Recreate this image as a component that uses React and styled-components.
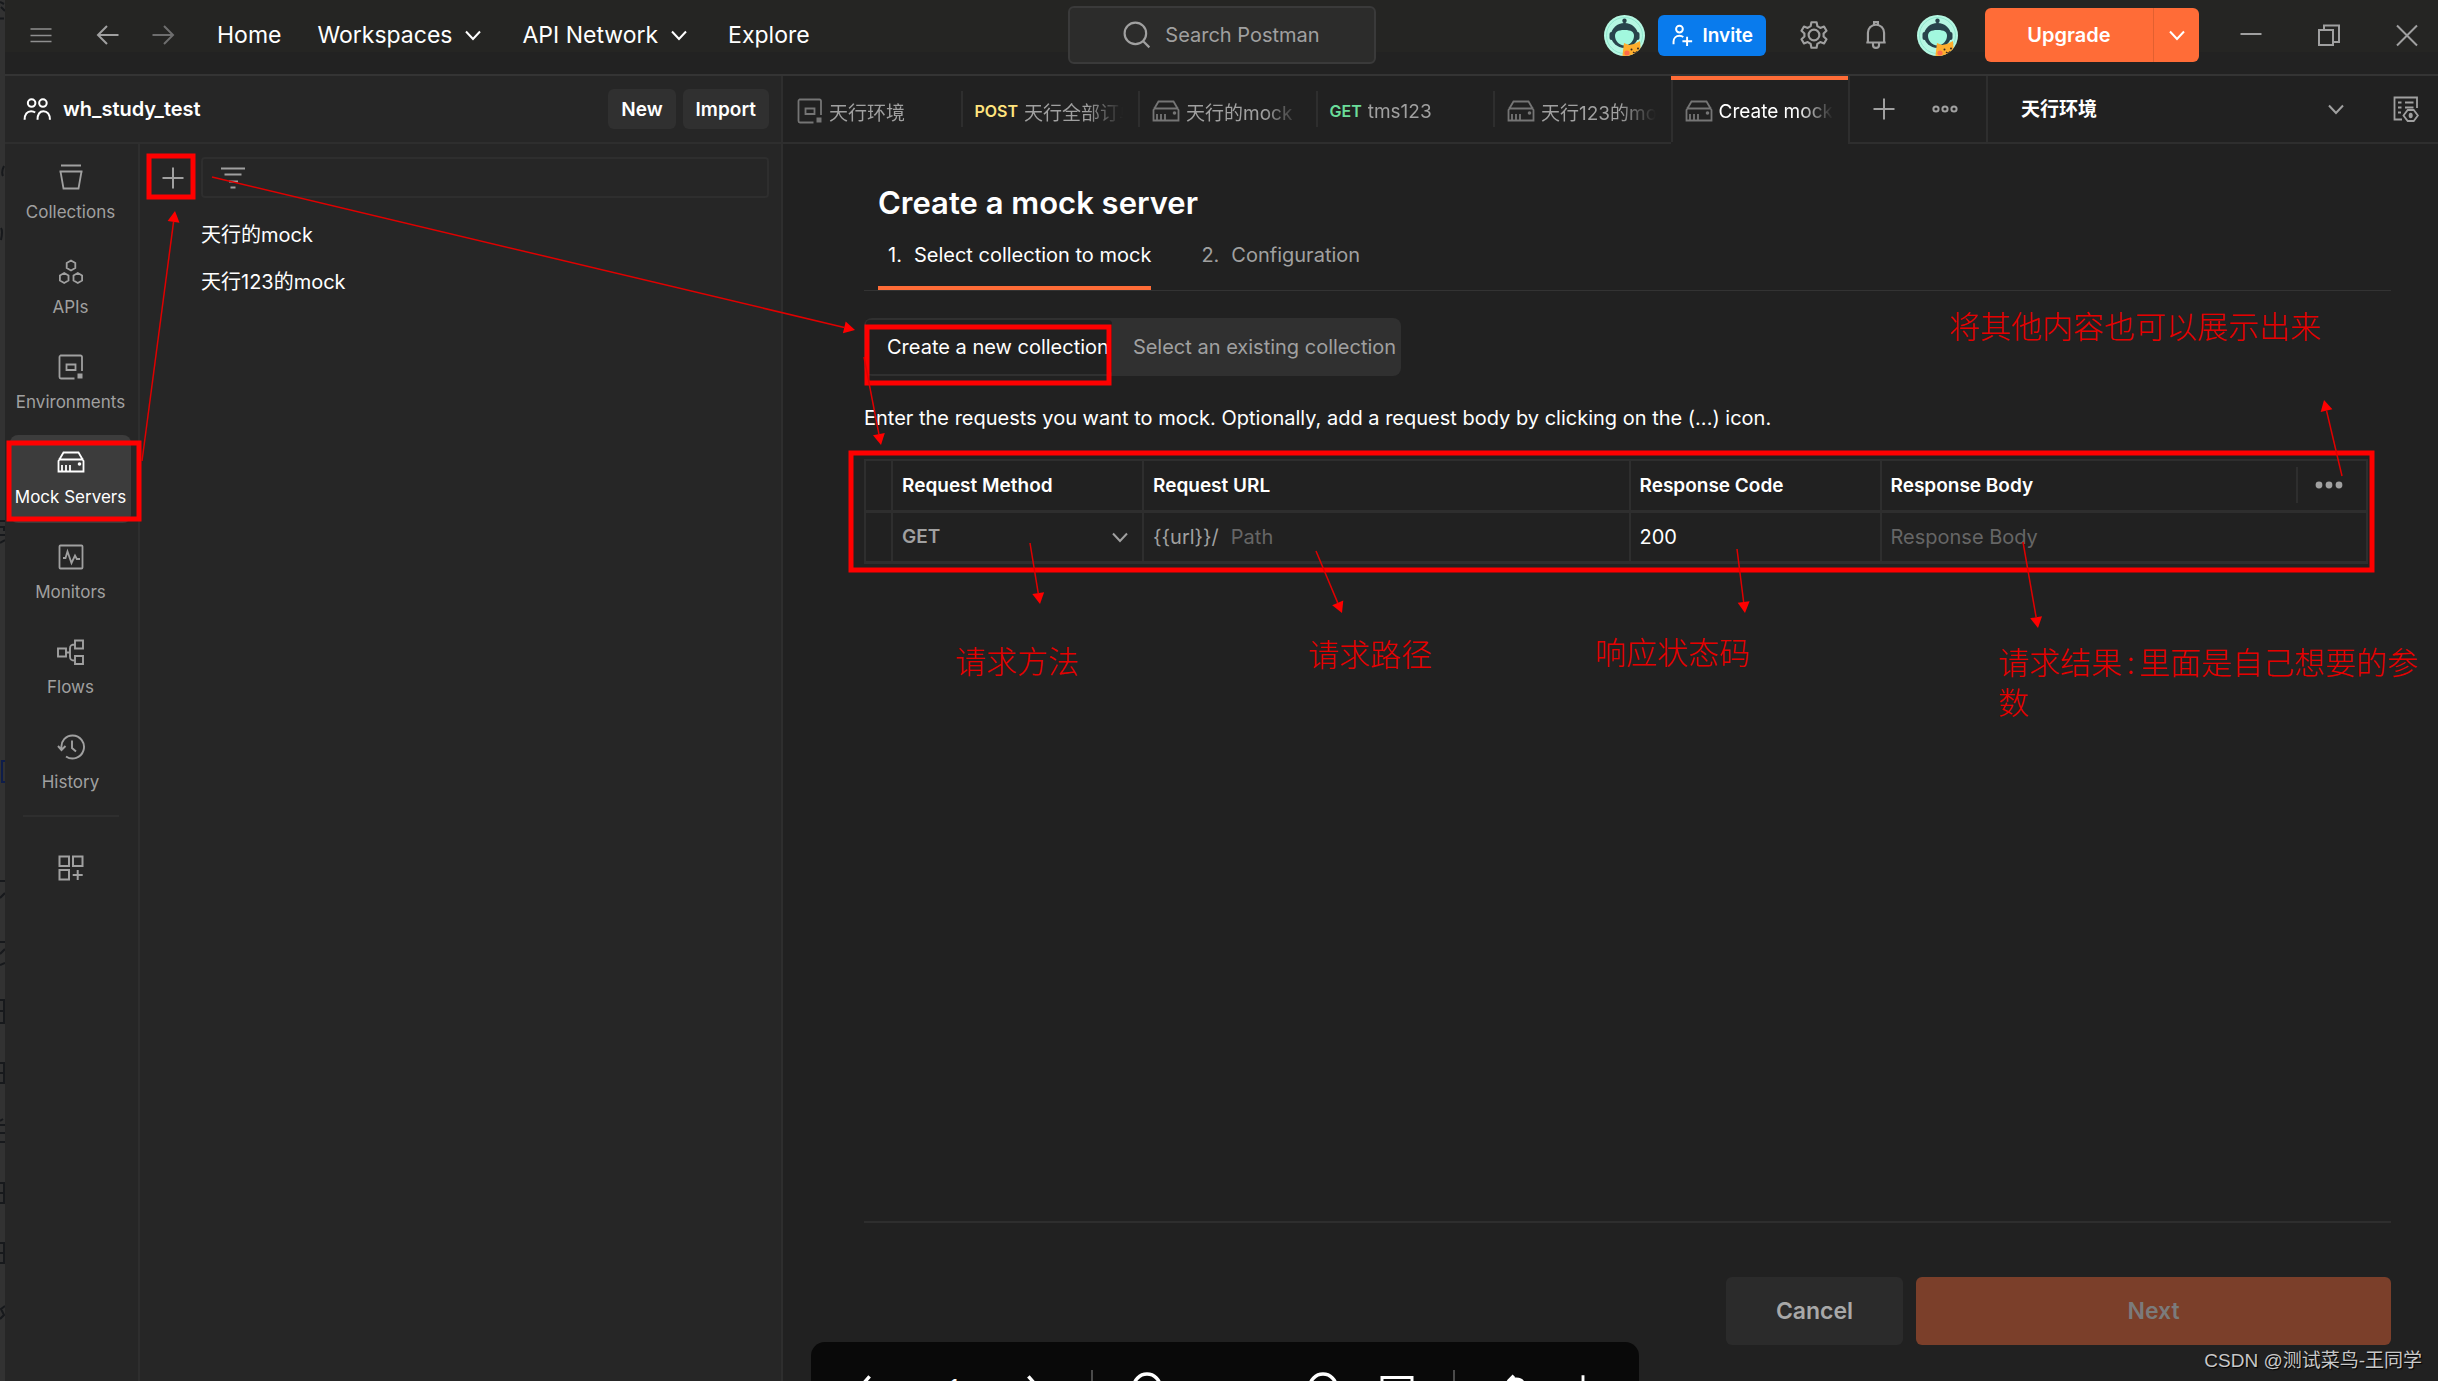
import React from "react";
import styled, { createGlobalStyle } from "styled-components";

const GlobalStyle = createGlobalStyle`
  *, *::before, *::after { box-sizing: border-box; }
  body {
    margin: 0;
    background: #212121;
    color: #ffffff;
    font-family: Inter, "Noto Sans CJK SC", sans-serif;
    font-size: 20px;
  }
  button, input, select { font: inherit; color: inherit; margin: 0; }
  svg { display: block; flex: none; }
`;

const line = "#2e2e2e";
const muted = "#a0a0a0";

/* ---------- shell ---------- */

const Page = styled.div`
  position: relative;
  display: flex;
  min-height: 100vh;
  overflow: hidden;
`;

const BackdropEdge = styled.div`
  flex: 0 0 5px;
  overflow: hidden;
  background: #323232;
`;

const AppWindow = styled.div`
  flex: 1;
  min-width: 0;
  display: flex;
  flex-direction: column;
`;

const IconButton = styled.button`
  display: grid;
  place-items: center;
  padding: 0;
  border: 0;
  background: none;
  color: ${(p) => p.$color || muted};
`;

const Header = styled.header`
  display: grid;
  grid-template-columns: 1fr 308px 1fr;
  align-items: center;
  height: 76px;
  padding: 0 18px 4px;
  border-bottom: 2px solid #343434;
  background: linear-gradient(#252523 52px, #222222 52px);
`;

const HeaderStart = styled.div`
  display: flex;
  align-items: center;
  gap: 41px;
  padding-left: 5px;
`;

const HistoryButtons = styled.div`
  display: flex;
  gap: 29px;
`;

const Nav = styled.nav`
  display: flex;
  align-items: center;
  gap: 36px;
`;

const NavLink = styled.a`
  display: flex;
  align-items: center;
  gap: 8px;
  color: #ffffff;
  font-size: 23px;
  line-height: 32px;
  text-decoration: none;
  white-space: nowrap;
`;

const SearchButton = styled.button`
  display: flex;
  align-items: center;
  justify-content: center;
  gap: 14px;
  height: 58px;
  border: 2px solid #3a3a3a;
  border-radius: 6px;
  background: #2c2c2b;
  color: ${muted};
  font-size: 20px;
`;

const HeaderEnd = styled.div`
  display: flex;
  align-items: center;
  justify-content: flex-end;
  gap: 39px;
`;

const Group = styled.div`
  display: flex;
  align-items: center;
  gap: ${(p) => p.$gap}px;
`;

const InviteButton = styled.button`
  display: flex;
  align-items: center;
  gap: 10px;
  height: 41px;
  padding: 0 13px;
  border: 0;
  border-radius: 6px;
  background: #097bed;
  font-size: 19px;
  font-weight: 600;
`;

const UpgradeGroup = styled.div`
  display: flex;
  height: 54px;
  border-radius: 6px;
  overflow: hidden;
  background: #ff6c37;
`;

const UpgradeButton = styled.button`
  width: 169px;
  border: 0;
  border-right: 1px solid #e2602f;
  background: none;
  font-size: 20px;
  font-weight: 600;
`;

const UpgradeMenu = styled(IconButton)`
  width: 45px;
`;

const Body = styled.div`
  flex: 1;
  display: flex;
  min-width: 0;
`;

/* ---------- left pane ---------- */

const SidePane = styled.aside`
  flex: 0 0 778px;
  display: flex;
  flex-direction: column;
  border-right: 2px solid ${line};
  background: #262626;
`;

const WorkspaceBar = styled.div`
  display: flex;
  align-items: center;
  gap: 12px;
  height: 68px;
  padding: 0 12px 0 18px;
  border-bottom: 2px solid ${line};
`;

const WorkspaceName = styled.h2`
  flex: 1;
  margin: 0;
  font-size: 20px;
  font-weight: 600;
`;

const SmallButton = styled.button`
  height: 40px;
  padding: 0 13px;
  border: 0;
  border-radius: 6px;
  background: #303030;
  font-size: 19px;
  font-weight: 600;
`;

const SideBody = styled.div`
  flex: 1;
  display: flex;
`;

const Rail = styled.nav`
  flex: 0 0 135px;
  display: flex;
  flex-direction: column;
  gap: 7px;
  padding: 6px 7px 0 5px;
  border-right: 2px solid ${line};
`;

const RailItem = styled.button`
  display: flex;
  flex-direction: column;
  align-items: center;
  gap: 10px;
  height: 88px;
  padding: 14px 0 0;
  border: 0;
  border-radius: 8px;
  background: ${(p) => (p.$active ? "#3c3c3c" : "none")};
  color: ${(p) => (p.$active ? "#ffffff" : muted)};
  font-size: 17px;
  line-height: 24px;
  white-space: nowrap;
`;

const RailRule = styled.hr`
  width: 96px;
  margin: 0 auto 17px;
  border: 0;
  border-top: 2px solid ${line};
`;

const ListPane = styled.div`
  flex: 1;
  min-width: 0;
  padding: 13px 12px 0;
`;

const ListTools = styled.div`
  display: flex;
  align-items: center;
  gap: 7px;
`;

const AddButton = styled(IconButton)`
  width: 42px;
  height: 40px;
`;

const Filter = styled.label`
  flex: 1;
  display: flex;
  align-items: center;
  gap: 12px;
  height: 41px;
  padding: 0 17px;
  border: 2px solid ${line};
  border-radius: 4px;
  color: ${muted};
`;

const BareInput = styled.input`
  flex: 1;
  width: 100%;
  min-width: 0;
  padding: 0;
  border: 0;
  outline: 0;
  background: none;
  color: #ffffff;
  font-size: 20px;
  &::placeholder { color: #666666; opacity: 1; }
`;

const MockList = styled.ul`
  margin: 0;
  padding: 14px 0 0 49px;
  list-style: none;
`;

const MockItem = styled.li`
  font-size: 20px;
  line-height: 47px;
`;

/* ---------- tab strip ---------- */

const MainPane = styled.main`
  flex: 1;
  min-width: 0;
  display: flex;
  flex-direction: column;
`;

const TabBar = styled.div`
  display: flex;
  height: 68px;
`;

const Tabs = styled.div`
  flex: 1;
  min-width: 0;
  display: flex;
`;

const Tab = styled.button`
  flex: 1 1 0;
  min-width: 0;
  display: flex;
  align-items: center;
  padding: 0 15px 0 0;
  border: 0;
  border-top: ${(p) => (p.$active ? "4px solid #ff6c37" : "0")};
  border-bottom: 2px solid ${(p) => (p.$active ? "transparent" : line)};
  background: none;
  color: ${(p) => (p.$active ? "#ffffff" : muted)};
  font-size: 19px;
`;

const TabInner = styled.span`
  flex: 1;
  min-width: 0;
  display: flex;
  align-items: center;
  gap: 6px;
  height: ${(p) => (p.$active ? "100%" : "36px")};
  padding-top: ${(p) => (p.$active ? 0 : 4)}px;
  padding-left: 12px;
  border-left: 2px solid ${(p) => (p.$divided ? line : "transparent")};
  color: inherit;
`;

const TabIcon = styled.span`
  color: #757575;
`;

const TabLabel = styled.span`
  flex: 1;
  min-width: 0;
  overflow: hidden;
  text-align: left;
  white-space: nowrap;
  mask-image: linear-gradient(to right, #000 calc(100% - 36px), transparent);
`;

const Method = styled.span`
  color: ${(p) => p.$color};
  font-size: 16px;
  font-weight: 600;
`;

const TabTools = styled.div`
  display: flex;
  align-items: center;
  gap: 35px;
  padding: 0 28px 0 21px;
  border-left: 2px solid ${line};
  border-bottom: 2px solid ${line};
`;

const EnvironmentBar = styled.div`
  flex: 0 0 452px;
  display: flex;
  align-items: center;
  gap: 44px;
  padding: 0 19px 0 33px;
  border-left: 2px solid ${line};
  border-bottom: 2px solid ${line};
`;

const SelectWrap = styled.div`
  flex: 1;
  display: grid;
  align-items: center;
  > * { grid-area: 1 / 1; }
  > svg { justify-self: end; pointer-events: none; color: ${muted}; }
`;

const Select = styled.select`
  appearance: none;
  width: 100%;
  padding: 0;
  border: 0;
  background: none;
  color: ${(p) => p.$color || "#ffffff"};
  font-size: 19px;
  font-weight: ${(p) => p.$weight || 700};
`;

/* ---------- mock form ---------- */

const Form = styled.form`
  flex: 1;
  display: flex;
  flex-direction: column;
  padding: 40px 47px 36px 81px;
`;

const Title = styled.h1`
  margin: 0;
  padding-left: 14px;
  font-size: 31px;
  font-weight: 600;
  line-height: 38px;
`;

const Steps = styled.ol`
  display: flex;
  gap: 40px;
  margin: 19px 0 0;
  padding: 0 14px;
  border-bottom: 1px solid #333333;
  list-style: none;
`;

const Step = styled.li`
  display: flex;
  gap: 12px;
  padding: 0 0 17px 10px;
  border-bottom: 4px solid ${(p) => (p.$active ? "#ff6c37" : "transparent")};
  color: ${(p) => (p.$active ? "#ffffff" : muted)};
  font-size: 20px;
  line-height: 28px;
`;

const Segment = styled.div`
  align-self: flex-start;
  display: flex;
  height: 58px;
  margin-top: 27px;
  padding: 2px;
  border-radius: 8px;
  background: #303030;
`;

const SegmentButton = styled.button`
  padding: 0 3px 0 21px;
  border: 0;
  border-radius: 4px;
  background: ${(p) => (p.$active ? "#212121" : "none")};
  color: ${(p) => (p.$active ? "#ffffff" : muted)};
  font-size: 20px;
  white-space: nowrap;
`;

const Hint = styled.p`
  margin: 28px 0 27px;
  font-size: 20px;
  line-height: 28px;
`;

const TableWrap = styled.div`
  flex: 1;
  padding-right: 23px;
`;

const Table = styled.table`
  width: 100%;
  table-layout: fixed;
  border-collapse: collapse;
`;

const Col = styled.col`
  width: ${(p) => (p.$width ? `${p.$width}px` : "auto")};
`;

const Th = styled.th`
  height: 51px;
  padding: 0 9px;
  border: 2px solid ${line};
  border-bottom-width: 3px;
  font-size: 19px;
  font-weight: 600;
  text-align: left;
`;

const HeadWithMenu = styled.div`
  display: flex;
  align-items: center;
  justify-content: space-between;
`;

const ColumnMenu = styled(IconButton)`
  height: 36px;
  padding: 0 14px 0 17px;
  border-left: 2px solid ${line};
`;

const Td = styled.td`
  height: 51px;
  padding: 0 9px;
  border: 2px solid ${line};
  border-bottom-width: 3px;
`;

const UrlField = styled.label`
  display: flex;
  gap: 12px;
  color: ${muted};
  font-size: 20px;
`;

const Footer = styled.footer`
  display: flex;
  justify-content: flex-end;
  gap: 13px;
  padding-top: 54px;
  border-top: 2px solid ${line};
`;

const FooterButton = styled.button`
  width: ${(p) => p.$width}px;
  height: 68px;
  border: 0;
  border-radius: 6px;
  background: ${(p) => (p.$primary ? "#7b3f2a" : "#2b2b2b")};
  color: ${(p) => (p.$primary ? "#7b7b7b" : "#a8a8a8")};
  font-size: 23px;
  font-weight: 600;
`;

/* ---------- overlays ---------- */

const ViewerBar = styled.div`
  position: absolute;
  left: 811px;
  bottom: 0;
  display: grid;
  grid-template-columns: 108px 70px 88px 30px 80px 100px 72px 76px 38px 84px 52px;
  justify-items: center;
  width: 828px;
  height: 39px;
  padding-top: 28px;
  overflow: hidden;
  border-radius: 14px 14px 0 0;
  background: #090909;
  color: #ffffff;
`;

const ViewerRule = styled.span`
  width: 2px;
  height: 40px;
  background: #4a4a4a;
`;

const ViewerPage = styled.span`
  padding-top: 5px;
  font-size: 20px;
  line-height: 24px;
`;

const ViewerButton = styled(IconButton)`
  align-content: start;
  height: 40px;
`;

const Markup = styled.svg`
  position: absolute;
  top: 0;
  left: 0;
  pointer-events: none;
`;

const Note = styled.p`
  position: absolute;
  left: ${(p) => p.$x}px;
  top: ${(p) => p.$y}px;
  width: ${(p) => p.$width || 440}px;
  margin: 0;
  color: #e60000;
  font-family: "Noto Sans CJK SC", sans-serif;
  font-size: 31px;
  font-weight: 300;
  line-height: 40px;
`;

const HalfWidth = styled.span`
  display: inline-block;
  width: 17px;
  text-align: center;
`;

const Watermark = styled.p`
  position: absolute;
  right: 16px;
  bottom: 6px;
  margin: 0;
  color: #c8c8c8;
  font-family: "Liberation Sans", "Noto Sans CJK SC", sans-serif;
  font-size: 19px;
  line-height: 28px;
  text-shadow: 1px 1px 1px #000000;
`;

/* ---------- icons ---------- */

function Icon({ children, size = 26, sw = 2 }) {
  return (
    <svg width={size} height={size} viewBox="0 0 26 26" fill="none" stroke="currentColor" strokeWidth={sw} aria-hidden="true">
      {children}
    </svg>
  );
}

const ChevronDown = () => <Icon><path d="M6 9.500l7 7.500 7-7.500" /></Icon>;
const PlusIcon = () => <Icon><path d="M13 2.500v21M2.500 13h21" /></Icon>;
const MenuIcon = () => <Icon sw={1.6}><path d="M2.500 7h21M2.500 13.500h21M2.500 19.500h21" /></Icon>;
const BackIcon = () => <Icon><path d="M23.500 13H3M12 4l-9 9 9 9" /></Icon>;
const ForwardIcon = () => <Icon><path d="M2.500 13H23M14 4l9 9-9 9" /></Icon>;
const SearchIcon = () => <Icon size={28}><circle cx="11.500" cy="11.500" r="10" /><path d="M18.800 18.800l5.700 5.700" /></Icon>;
const MinimizeIcon = () => <Icon><path d="M2.500 12h21" /></Icon>;
const RestoreIcon = () => <Icon><path d="M3 8h14v15H3z" /><path d="M8 8V3.500h15V20h-6" /></Icon>;
const CloseIcon = () => <Icon><path d="M3 3.500l20 20M23 3.500l-20 20" /></Icon>;
const TeamIcon = () => (
  <Icon size={28} sw={1.9}>
    <circle cx="8" cy="7.500" r="3.500" /><circle cx="18.500" cy="7.500" r="3.500" />
    <path d="M1.500 23c0-5 2.500-8 6-8 1.500 0 2.800.4 3.800 1.200M13.500 23c0-5 2-8 5.500-8s6 3 6 8" />
  </Icon>
);
const InviteIcon = () => (
  <Icon size={22} sw={2.3}>
    <circle cx="10" cy="6" r="4" />
    <path d="M3 24v-3c0-4.500 3-7 7-7 2 0 3.500.6 4.500 1.500M19 15v11M13.500 20.500H25" />
  </Icon>
);
const GearIcon = () => (
  <Icon size={28}>
    <circle cx="13" cy="13" r="5" />
    <path d="M10.600 1.200h4.800l.7 3.600 2.700 1.600 3.500-1.300 2.300 4-2.700 2.500v2.800l2.700 2.500-2.300 4-3.500-1.300-2.700 1.600-.7 3.600h-4.800l-.7-3.600-2.700-1.600-3.500 1.300-2.300-4 2.700-2.500v-2.800L1.400 9.100l2.300-4 3.500 1.300 2.700-1.600z" strokeLinejoin="round" />
  </Icon>
);
const BellIcon = () => (
  <Icon size={28}>
    <path d="M4 20h18M5.500 20v-9c0-4.200 3.300-7.500 7.500-7.500s7.500 3.300 7.500 7.500v9" />
    <path d="M11.200 3.600V1h3.600v2.600M10.200 20v2.200a2.800 2.800 0 0 0 5.600 0V20" />
  </Icon>
);
const CollectionIcon = () => <Icon sw={1.8}><path d="M3 1.500h20M1.500 7.500h23M2.500 7.500l3 17h15l3-17" /></Icon>;
const ApiIcon = () => (
  <Icon sw={1.8}>
    <path d="M13 1.500l4.300 2.500v5L13 11.500 8.700 9V4zM6.200 14l4.300 2.500v5L6.200 24 1.900 21.500v-5zM19.800 14l4.300 2.500v5L19.800 24l-4.300-2.500v-5z" />
  </Icon>
);
const EnvIcon = () => (
  <Icon sw={1.8}>
    <path d="M24 17V3a1.500 1.500 0 0 0-1.500-1.500h-20A1.500 1.500 0 0 0 1.500 3v20a1.500 1.500 0 0 0 1.500 1.500h13.500" />
    <path d="M8.500 10.500h9v5.500h-9z" />
    <path d="M19.500 19.500h5v5h-5z" fill="currentColor" stroke="none" />
  </Icon>
);
const MockIcon = ({ sw = 1.8 }) => (
  <svg width="28" height="26" viewBox="0 0 28 26" fill="none" stroke="currentColor" strokeWidth={sw} aria-hidden="true">
    <path d="M1.500 12L6.500 3.500h15l5 8.500v10.500h-25zM1.500 10.500h25M5 16v6M9 16v6M13 16v6" />
    <circle cx="22.500" cy="15" r="1.800" fill="currentColor" stroke="none" />
  </svg>
);
const MonitorIcon = () => (
  <Icon sw={1.8}>
    <rect x="1.500" y="1.500" width="23" height="23" rx="1" />
    <path d="M5 14h2.500L9.500 7.500l4 11.500 3.500-7.500 1.800 3.500H22" />
  </Icon>
);
const FlowIcon = () => (
  <svg width="28" height="26" viewBox="0 0 28 26" fill="none" stroke="currentColor" strokeWidth="1.9" aria-hidden="true">
    <path d="M1 9.500h8v8H1zM18 1.500h8v8h-8zM18 17h8v8h-8zM9 13.500h3.500M18 5.500c-4 0-5 1-5 4v8c0 3 1 4 5 4" />
  </svg>
);
const HistoryIcon = () => (
  <svg width="28" height="26" viewBox="0 0 28 26" fill="none" stroke="currentColor" strokeWidth="1.9" aria-hidden="true">
    <path d="M4.500 14.500C3.500 7 9 1.500 15.500 1.500a11.500 11.500 0 1 1-6.500 21M1 12l3.500 4L8.500 12M15 6.500v7.500l4 3.500" />
  </svg>
);
const MoreAppsIcon = () => (
  <Icon sw={2}>
    <path d="M1.500 1.500H11V11H1.500zM15 1.500h9.500V11H15zM1.500 15H11v9.500H1.500zM19.700 15v10M14.700 20h10" />
  </Icon>
);
const FilterIcon = () => <Icon sw={1.9}><path d="M1 3.500h24M4.500 9.500h17M9 16.500h9M10.500 22.500h5" /></Icon>;
const TabMoreIcon = () => (
  <Icon><circle cx="4" cy="13" r="2.600" /><circle cx="13" cy="13" r="2.600" /><circle cx="22" cy="13" r="2.600" /></Icon>
);
const DotsIcon = () => (
  <svg width="28" height="26" viewBox="0 0 28 26" fill="currentColor" aria-hidden="true">
    <circle cx="4" cy="13" r="3.400" /><circle cx="14" cy="13" r="3.400" /><circle cx="24" cy="13" r="3.400" />
  </svg>
);
const EnvQuickLook = () => (
  <Icon sw={1.8}>
    <path d="M24 12V1.500H1.500v22H9M5 6.500h3.500M12 6.500h8.500M5 11.500h3.500M12 11.500h8.500M5 16.500h3" />
    <path d="M10.500 19.500l4.200-5.500h6l4.200 5.500-4.200 5.500h-6z" /><ellipse cx="17.700" cy="19.500" rx="2" ry="2.800" fill="currentColor" stroke="none" />
  </Icon>
);

function Avatar({ id }) {
  return (
    <svg width="41" height="41" viewBox="0 0 41 41" role="img" aria-label="Account">
      <defs><clipPath id={id}><circle cx="20.500" cy="20.500" r="20.500" /></clipPath></defs>
      <g clipPath={`url(#${id})`}>
        <rect width="41" height="41" fill="#b5f7e2" />
        <circle cx="20.500" cy="20.500" r="18" fill="none" stroke="#8fe6cd" strokeWidth="1" />
        <rect x="19.500" y="5" width="2" height="6" fill="#28434b" />
        <circle cx="20.500" cy="5.800" r="2.200" fill="#28434b" />
        <ellipse cx="20.500" cy="20.500" rx="13.500" ry="12.500" fill="#28434b" />
        <rect x="5.500" y="17" width="4" height="8" rx="2" fill="#28434b" />
        <rect x="31.500" y="17" width="4" height="8" rx="2" fill="#28434b" />
        <path d="M11 21c0-4 2.500-6 9.500-6s9.500 2 9.500 6-3.500 9.500-9.500 9.500S11 25 11 21z" fill="#a2f8de" />
        <path d="M20 28l5 2 5-1 6-3 .5 7-1 12H18l1-9z" fill="#ffae2e" />
        <circle cx="23" cy="38" r="2.600" fill="#ff6c4a" />
        <circle cx="27.500" cy="34.500" r="1" fill="#3a2a20" /><circle cx="34" cy="33.500" r="1" fill="#3a2a20" />
        <path d="M29 37l2 1.500 2-2" fill="none" stroke="#3a2a20" strokeWidth="1.200" />
      </g>
    </svg>
  );
}

/* ---------- data ---------- */

const railItems = [
  ["Collections", CollectionIcon],
  ["APIs", ApiIcon],
  ["Environments", EnvIcon],
  ["Mock Servers", MockIcon],
  ["Monitors", MonitorIcon],
  ["Flows", FlowIcon],
  ["History", HistoryIcon],
];

const tabs = [
  { label: "天行环境", icon: <EnvIcon /> },
  { label: "天行全部订单", method: "POST", color: "#ffe47e" },
  { label: "天行的mock", icon: <MockIcon /> },
  { label: "tms123", method: "GET", color: "#6bdd9a" },
  { label: "天行123的mock", icon: <MockIcon /> },
  { label: "Create mock server", icon: <MockIcon />, active: true },
];

const boxes = [
  [149, 156, 44, 41],
  [9, 443, 130, 76],
  [867, 327, 242, 56],
  [851, 453, 1521, 117],
];

const arrows = [
  [142, 461, 175, 211],
  [212, 177, 855, 330],
  [864, 357, 881, 445],
  [1030, 543, 1040, 604],
  [1316, 551, 1342, 613],
  [1737, 549, 1745, 613],
  [2023, 542, 2038, 628],
  [2342, 476, 2324, 400],
];

function Arrow({ from }) {
  const [x1, y1, x2, y2] = from;
  const len = Math.hypot(x2 - x1, y2 - y1);
  const ux = (x2 - x1) / len;
  const uy = (y2 - y1) / len;
  const bx = x2 - ux * 11;
  const by = y2 - uy * 11;
  const points = `${x2},${y2} ${bx - uy * 6},${by + ux * 6} ${bx + uy * 6},${by - ux * 6}`;
  return (
    <g>
      <line x1={x1} y1={y1} x2={bx} y2={by} stroke="#e00000" strokeWidth="1.500" />
      <polygon points={points} fill="#ff0000" />
    </g>
  );
}

export default function App() {
  return (
    <Page>
      <GlobalStyle />
      <BackdropEdge>
        <svg width="5" height="1381" viewBox="0 0 5 1381" fill="none" stroke="#17191c" strokeWidth="2" aria-hidden="true">
          <path d="M0 2l4 2M1 7l4 4M0 18.500h4M4 166q-3 6-1 10M1 228q2 3 0 12M0 521h5M0 527h4v4M0 535h5M0 543l5-3" />
          <path d="M0 881h5M0 898l5-5M0 942h5M0 954l5-5M0 965l5-2M0 1000h4v23H0M0 1011h5M0 1063h4v20H0M0 1073h5M0 1121l3-2M0 1125h5M0 1133h5M0 1142h5M0 1183h4v20H0M0 1193h5M0 1243h4v20H0M0 1253h5M5 1306l-4 3 3 6-4 4" />
          <path d="M5 761H2v21h3" stroke="#0e1d4a" />
        </svg>
      </BackdropEdge>
      <AppWindow>
        <Header>
          <HeaderStart>
            <IconButton aria-label="Menu" $color="#8f8f8f"><MenuIcon /></IconButton>
            <HistoryButtons>
              <IconButton aria-label="Back"><BackIcon /></IconButton>
              <IconButton aria-label="Forward" $color="#6e6e6e"><ForwardIcon /></IconButton>
            </HistoryButtons>
            <Nav>
              <NavLink href="#home">Home</NavLink>
              <NavLink href="#workspaces">Workspaces<ChevronDown /></NavLink>
              <NavLink href="#network">API Network<ChevronDown /></NavLink>
              <NavLink href="#explore">Explore</NavLink>
            </Nav>
          </HeaderStart>
          <SearchButton type="button"><SearchIcon />Search Postman</SearchButton>
          <HeaderEnd>
            <Group $gap={34}>
              <Group $gap={13}>
                <Avatar id="avatar-team" />
                <InviteButton type="button"><InviteIcon />Invite</InviteButton>
              </Group>
              <IconButton aria-label="Settings"><GearIcon /></IconButton>
              <Group $gap={27}>
                <IconButton aria-label="Notifications"><BellIcon /></IconButton>
                <Avatar id="avatar-user" />
                <UpgradeGroup>
                  <UpgradeButton type="button">Upgrade</UpgradeButton>
                  <UpgradeMenu aria-label="Upgrade options" $color="#ffffff"><ChevronDown /></UpgradeMenu>
                </UpgradeGroup>
              </Group>
            </Group>
            <Group $gap={52}>
              <IconButton aria-label="Minimize"><MinimizeIcon /></IconButton>
              <IconButton aria-label="Restore"><RestoreIcon /></IconButton>
              <IconButton aria-label="Close"><CloseIcon /></IconButton>
            </Group>
          </HeaderEnd>
        </Header>

        <Body>
          <SidePane>
            <WorkspaceBar>
              <TeamIcon />
              <WorkspaceName>wh_study_test</WorkspaceName>
              <Group $gap={7}>
                <SmallButton type="button">New</SmallButton>
                <SmallButton type="button">Import</SmallButton>
              </Group>
            </WorkspaceBar>
            <SideBody>
              <Rail>
                {railItems.map(([label, Glyph]) => (
                  <RailItem key={label} type="button" $active={label === "Mock Servers"}>
                    <Glyph />
                    {label}
                  </RailItem>
                ))}
                <RailRule />
                <RailItem type="button" aria-label="Configure sidebar"><MoreAppsIcon /></RailItem>
              </Rail>
              <ListPane>
                <ListTools>
                  <AddButton aria-label="Add mock server"><PlusIcon /></AddButton>
                  <Filter>
                    <FilterIcon />
                    <BareInput aria-label="Filter mock servers" />
                  </Filter>
                </ListTools>
                <MockList>
                  <MockItem>天行的mock</MockItem>
                  <MockItem>天行123的mock</MockItem>
                </MockList>
              </ListPane>
            </SideBody>
          </SidePane>

          <MainPane>
            <TabBar>
              <Tabs>
                {tabs.map((tab, i) => (
                  <Tab key={tab.label} type="button" $active={tab.active}>
                    <TabInner $active={tab.active} $divided={i > 0}>
                      {tab.icon ? <TabIcon>{tab.icon}</TabIcon> : <Method $color={tab.color}>{tab.method}</Method>}
                      <TabLabel>{tab.label}</TabLabel>
                    </TabInner>
                  </Tab>
                ))}
              </Tabs>
              <TabTools>
                <IconButton aria-label="New tab"><PlusIcon /></IconButton>
                <IconButton aria-label="Tab options"><TabMoreIcon /></IconButton>
              </TabTools>
              <EnvironmentBar>
                <SelectWrap>
                  <Select aria-label="Environment"><option>天行环境</option></Select>
                  <ChevronDown />
                </SelectWrap>
                <IconButton aria-label="Environment quick look"><EnvQuickLook /></IconButton>
              </EnvironmentBar>
            </TabBar>

            <Form onSubmit={(e) => e.preventDefault()}>
              <Title>Create a mock server</Title>
              <Steps>
                <Step $active><span>1.</span>Select collection to mock</Step>
                <Step><span>2.</span>Configuration</Step>
              </Steps>
              <Segment>
                <SegmentButton type="button" $active>Create a new collection</SegmentButton>
                <SegmentButton type="button">Select an existing collection</SegmentButton>
              </Segment>
              <Hint>Enter the requests you want to mock. Optionally, add a request body by clicking on the (...) icon.</Hint>
              <TableWrap>
                <Table>
                  <colgroup>
                    <Col $width={27} /><Col $width={251} /><Col /><Col $width={251} /><Col />
                  </colgroup>
                  <thead>
                    <tr>
                      <Th />
                      <Th>Request Method</Th>
                      <Th>Request URL</Th>
                      <Th>Response Code</Th>
                      <Th>
                        <HeadWithMenu>
                          Response Body
                          <ColumnMenu type="button" aria-label="Show columns"><DotsIcon /></ColumnMenu>
                        </HeadWithMenu>
                      </Th>
                    </tr>
                  </thead>
                  <tbody>
                    <tr>
                      <Td />
                      <Td>
                        <SelectWrap>
                          <Select aria-label="Request Method" $color={muted} $weight={600}><option>GET</option></Select>
                          <ChevronDown />
                        </SelectWrap>
                      </Td>
                      <Td><UrlField>{"{{url}}/"}<BareInput placeholder="Path" /></UrlField></Td>
                      <Td><BareInput aria-label="Response Code" defaultValue="200" /></Td>
                      <Td><BareInput aria-label="Response Body" placeholder="Response Body" /></Td>
                    </tr>
                  </tbody>
                </Table>
              </TableWrap>
              <Footer>
                <FooterButton type="button" $width={177}>Cancel</FooterButton>
                <FooterButton type="submit" $primary $width={475}>Next</FooterButton>
              </Footer>
            </Form>
          </MainPane>
        </Body>
      </AppWindow>

      <ViewerBar>
        <ViewerButton aria-label="Previous" $color="#ffffff"><Icon size={30} sw={3}><path d="M17 5.500L7 17l10 11" /></Icon></ViewerButton>
        <ViewerPage>1</ViewerPage>
        <ViewerButton aria-label="Next picture" $color="#ffffff"><Icon size={30} sw={3}><path d="M9 5.500L19 17 9 28" /></Icon></ViewerButton>
        <ViewerRule />
        <ViewerButton aria-label="Zoom out" $color="#ffffff"><Icon size={30} sw={3}><circle cx="13" cy="15" r="11.500" /></Icon></ViewerButton>
        <span />
        <ViewerButton aria-label="Zoom in" $color="#ffffff"><Icon size={30} sw={3}><circle cx="13" cy="15" r="11.500" /></Icon></ViewerButton>
        <ViewerButton aria-label="Actual size" $color="#ffffff">
          <svg width="34" height="30" viewBox="0 0 34 30" fill="none" stroke="currentColor" strokeWidth="3" aria-hidden="true"><path d="M2 7.500h30V28H2z" /></svg>
        </ViewerButton>
        <ViewerRule />
        <ViewerButton aria-label="Rotate" $color="#ffffff"><Icon size={30} sw={3}><path d="M20 13c0-3-2-5-6-5H9M12 5L8 9l4 4" /></Icon></ViewerButton>
        <ViewerButton aria-label="Download" $color="#ffffff"><Icon size={30} sw={2.5}><path d="M13 4.500v20" /></Icon></ViewerButton>
      </ViewerBar>

      <Markup width="2438" height="1381" viewBox="0 0 2438 1381" aria-hidden="true">
        {boxes.map(([x, y, w, h]) => (
          <rect key={`${x}-${y}`} x={x} y={y} width={w} height={h} fill="none" stroke="#ff0000" strokeWidth="5" />
        ))}
        {arrows.map((a) => <Arrow key={a.join("-")} from={a} />)}
      </Markup>
      <Note $x={1949} $y={305}>将其他内容也可以展示出来</Note>
      <Note $x={955} $y={640}>请求方法</Note>
      <Note $x={1308} $y={633}>请求路径</Note>
      <Note $x={1595} $y={631}>响应状态码</Note>
      <Note $x={1998} $y={641} $width={424}>请求结果<HalfWidth>:</HalfWidth>里面是自己想要的参数</Note>
      <Watermark>CSDN @测试菜鸟-王同学</Watermark>
    </Page>
  );
}
